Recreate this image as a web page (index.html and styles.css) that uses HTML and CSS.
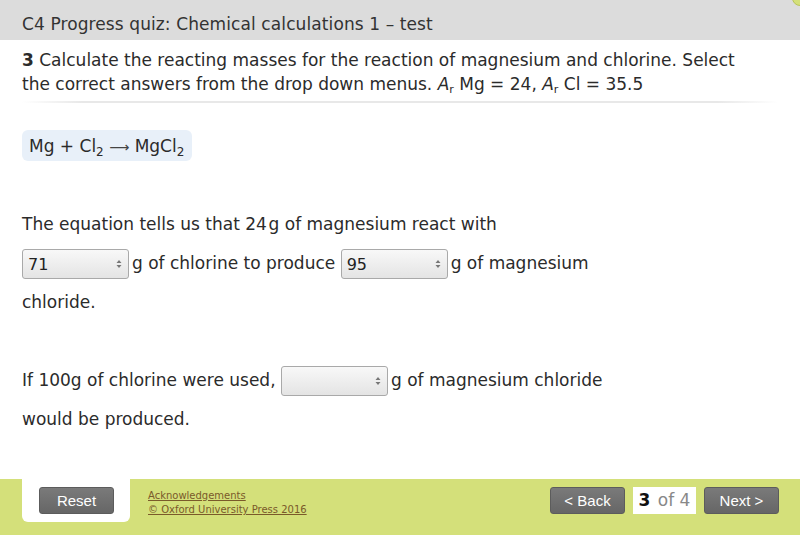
FILE: index.html
```html
<!DOCTYPE html>
<html lang="en">
<head>
    <meta charset="UTF-8">
    <title>C4 Progress quiz: Chemical calculations 1 – test</title>
    <link rel="stylesheet" href="styles.css">
</head>
<body>

    <div class="quiz">
        <div class="quiz-header">
            <h1 class="quiz-title">C4 Progress quiz: Chemical calculations 1 – test</h1>
            <span class="corner-dot"></span>
        </div>

        <div class="quiz-body">
            <p class="question"><b>3</b> Calculate the reacting masses for the reaction of magnesium and chlorine. Select the correct answers from the drop down menus. <i>A</i><sub class="r">r</sub> Mg = 24, <i>A</i><sub class="r">r</sub> Cl = 35.5</p>
            <div class="rule"></div>

            <div class="equation">Mg + Cl<sub>2</sub> <span class="arrow">⟶</span> MgCl<sub>2</sub></div>

            <div class="part">
                <p class="line">The equation tells us that 24&#8202;g of magnesium react with</p>
                <p class="line"><span class="dropdown first"><select><option>71</option></select><svg class="updown" width="6" height="10" viewBox="0 0 6 10"><path d="M3 1 L5.5 4 H0.5 Z M3 9 L5.5 6 H0.5 Z" fill="#777"/></svg></span>g of chlorine to produce <span class="dropdown"><select><option>95</option></select><svg class="updown" width="6" height="10" viewBox="0 0 6 10"><path d="M3 1 L5.5 4 H0.5 Z M3 9 L5.5 6 H0.5 Z" fill="#777"/></svg></span>g of magnesium</p>
                <p class="line">chloride.</p>
            </div>

            <div class="part second">
                <p class="line">If 100g of chlorine were used, <span class="dropdown"><select><option></option></select><svg class="updown" width="6" height="10" viewBox="0 0 6 10"><path d="M3 1 L5.5 4 H0.5 Z M3 9 L5.5 6 H0.5 Z" fill="#777"/></svg></span>g of magnesium chloride</p>
                <p class="line">would be produced.</p>
            </div>
        </div>

        <div class="quiz-footer">
            <div class="reset-tab">
                <button class="btn">Reset</button>
            </div>
            <div class="credits">
                <a href="#">Acknowledgements</a>
                <a href="#">© Oxford University Press 2016</a>
            </div>
            <div class="nav">
                <button class="btn">&lt; Back</button>
                <div class="page-count"><b>3</b> of 4</div>
                <button class="btn">Next &gt;</button>
            </div>
        </div>
    </div>

</body>
</html>
```

FILE: styles.css
```css
* {
    margin: 0;
    padding: 0;
    box-sizing: border-box;
}
body {
    width: 800px;
    height: 535px;
    overflow: hidden;
    font-family: "DejaVu Sans", Verdana, sans-serif;
    color: #2b2b2b;
    background: #fff;
}
.quiz {
    display: flex;
    flex-direction: column;
    height: 535px;
}
.quiz-header {
    position: relative;
    flex-shrink: 0;
    height: 40px;
    padding: 12px 22px 0;
    background: #dcdcdc;
    overflow: hidden;
}
.quiz-title {
    font-size: 17px;
    line-height: 24px;
    font-weight: normal;
    color: #333;
    letter-spacing: 0.1px;
}
.corner-dot {
    position: absolute;
    top: -10px;
    right: -8px;
    width: 16px;
    height: 16px;
    border-radius: 50%;
    background: #d4e07a;
    border: 1px solid #b9c45a;
}
.quiz-body {
    flex: 1;
    padding: 8px 22px 0;
}
.question {
    font-size: 17px;
    line-height: 24px;
    color: #2b2b2b;
    width: 735px;
}
.question sub.r {
    font-size: 11px;
    vertical-align: -3px;
    line-height: 0;
}
.rule {
    height: 2px;
    margin-top: 5px;
    background: linear-gradient(to right, #fff 0%, #e8e8e8 8%, #e8e8e8 92%, #fff 100%);
    width: 756px;
}
.equation {
    display: inline-block;
    margin-top: 27px;
    height: 31px;
    padding: 4px 8px 0 7px;
    background: #e8f0f9;
    border-radius: 6px;
    font-size: 17px;
    line-height: 24px;
}
.equation sub {
    font-size: 12px;
    vertical-align: -4px;
    line-height: 0;
}
.equation .arrow {
    font-size: 14px;
    color: #444;
}
.part {
    margin-top: 44px;
}
.part.second {
    margin-top: 39px;
}
.line {
    font-size: 17px;
    line-height: 39px;
    white-space: nowrap;
}
.dropdown {
    position: relative;
    display: inline-block;
    margin: 0 3px 0 0;
    vertical-align: middle;
    line-height: 0;
}
.dropdown select {
    appearance: none;
    -webkit-appearance: none;
    width: 107px;
    height: 30px;
    padding: 0 5px;
    border: 1px solid #a9a9a9;
    border-radius: 3px;
    background: linear-gradient(#f8f8f8, #e4e4e4);
    font-family: "DejaVu Sans", Verdana, sans-serif;
    font-size: 16px;
    color: #222;
}
.updown {
    position: absolute;
    right: 7px;
    top: 10px;
}
.quiz-footer {
    display: flex;
    align-items: flex-start;
    flex-shrink: 0;
    height: 56px;
    padding: 0 21px 0 22px;
    background: #d4e07a;
}
.reset-tab {
    width: 108px;
    height: 43px;
    padding: 8px 0 0 17px;
    background: #fff;
    border-radius: 0 0 6px 6px;
}
.btn {
    height: 27px;
    padding: 0;
    border: 1px solid #5c5c5c;
    border-radius: 3px;
    background: linear-gradient(#7a7a7a, #666);
    color: #fff;
    font-family: "Liberation Sans", Arial, sans-serif;
    font-size: 15px;
    width: 75px;
}
.credits {
    display: flex;
    flex-direction: column;
    margin: 10px 0 0 18px;
    font-size: 10px;
    line-height: 14px;
}
.credits a {
    color: #7a5a2a;
}
.nav {
    display: flex;
    gap: 8px;
    margin: 8px 0 0 auto;
}
.page-count {
    width: 63px;
    height: 27px;
    background: #fff;
    font-size: 17px;
    line-height: 27px;
    text-align: center;
    color: #888;
}
.page-count b {
    color: #111;
    margin-right: 2px;
}
```
